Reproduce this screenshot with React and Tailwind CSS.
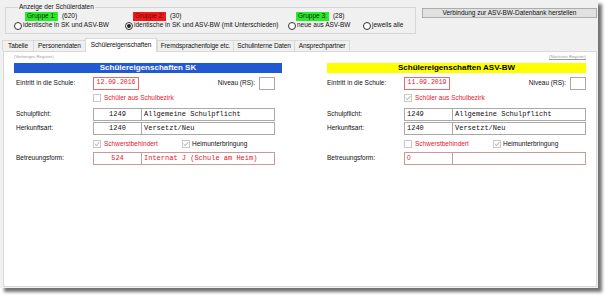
import React from "react";

const SANS = "[font-family:'Liberation_Sans',Arial,sans-serif]";
const MONO = "[font-family:'Liberation_Mono','Courier_New',monospace]";

function Radio({ checked }) {
  return (
    <span className="flex h-[8px] w-[8px] shrink-0 items-center justify-center rounded-full border border-[#333] bg-white">
      {checked && <span className="h-[4px] w-[4px] rounded-full bg-[#222]" />}
    </span>
  );
}

function Check({ checked }) {
  return (
    <span className="flex h-[8px] w-[8px] shrink-0 items-center justify-center border border-[#c8c8c8] bg-white">
      {checked && (
        <svg width="6" height="6" viewBox="0 0 6 6">
          <path d="M0.7 3.1 L2.3 4.7 L5.3 1.1" stroke="#9c9c9c" strokeWidth="0.9" fill="none" />
        </svg>
      )}
    </span>
  );
}

function GroupOption({ width, offset, tag, tagClass, count, label, checked }) {
  return (
    <div className={`flex flex-col ${width}`}>
      <div className={`mt-[1px] flex h-[9px] items-center ${offset}`}>
        {tag && <span className={`flex h-[9px] items-center px-[2px] ${tagClass}`}>{tag}</span>}
        {count && <span className="ml-[4px]">{count}</span>}
      </div>
      <div className="flex h-[9px] items-center gap-[1px]">
        <Radio checked={checked} />
        <span>{label}</span>
      </div>
    </div>
  );
}

function Row({ label, children, className = "" }) {
  return (
    <div className={`flex items-center ${className}`}>
      <span className="w-[77px] shrink-0">{label}</span>
      {children}
    </div>
  );
}

function CodeField({ code, text, centered, red, plainCode, border = "border-[#a9a9a9]" }) {
  const color = red ? "text-[#e5162e]" : "text-[#111]";
  return (
    <div className={`flex h-[13px] w-[182px] border bg-white ${border} ${color}`}>
      <div
        className={`flex w-[48px] shrink-0 items-center border-r border-[#a9a9a9] ${centered ? "justify-center" : "pl-[2px]"} ${plainCode ? "text-[6.5px]" : `${MONO} text-[7px]`}`}
      >
        {code}
      </div>
      <div className={`flex items-center pl-[2px] ${MONO} text-[7px]`}>{text}</div>
    </div>
  );
}

function Column({ data, className }) {
  return (
    <div className={className}>
      <div className={`flex h-[10px] items-center justify-center text-[8px] font-bold ${data.headerClass}`}>
        {data.title}
      </div>
      <div className={data.inner}>
        <Row label="Eintritt in die Schule:" className="mt-[4px] h-[13px]">
          <div className={`flex h-[13px] w-[46px] items-center justify-center border border-[#e86a6a] bg-white text-[6.5px] text-[#e5162e] ${MONO}`}>
            {data.date}
          </div>
          <span className="ml-auto">Niveau (RS):</span>
          <div className="ml-[4px] h-[13px] w-[16px] border border-[#a9a9a9] bg-white" />
        </Row>
        <Row label="" className="mt-[4px] h-[8px]">
          <Check checked={data.bezirk} />
          <span className="ml-[3px] text-[#e5162e]">Schüler aus Schulbezirk</span>
        </Row>
        <Row label="Schulpflicht:" className="mt-[6px] h-[13px]">
          <CodeField code="1249" text="Allgemeine Schulpflicht" centered={data.centered} />
        </Row>
        <Row label="Herkunftsart:" className="mt-[1px] h-[13px]">
          <CodeField code="1240" text="Versetzt/Neu" centered={data.centered} />
        </Row>
        <Row label="" className="mt-[5px] h-[8px]">
          <div className="flex w-[89px] items-center">
            <Check checked={data.schwerst} />
            <span className="ml-[3px] text-[#e5162e]">Schwerstbehindert</span>
          </div>
          <Check checked />
          <span className="ml-[2px]">Heimunterbringung</span>
        </Row>
        <Row label="Betreuungsform:" className="mt-[4px] h-[13px]">
          <CodeField
            code={data.betrCode}
            text={data.betrText}
            centered={data.centered}
            plainCode={data.plainCode}
            red
            border="border-[#c99a9a]"
          />
        </Row>
      </div>
    </div>
  );
}

const columns = [
  {
    title: "Schülereigenschaften SK",
    headerClass: "bg-[#2159d2] text-white",
    inner: "w-[259px] pl-[2px] box-content",
    date: "12.09.2016",
    bezirk: false,
    schwerst: true,
    centered: true,
    betrCode: "524",
    betrText: "Internat J (Schule am Heim)",
    plainCode: false,
  },
  {
    title: "Schülereigenschaften ASV-BW",
    headerClass: "bg-[#ffff00] text-black",
    inner: "w-[259px]",
    date: "11.09.2019",
    bezirk: true,
    schwerst: false,
    centered: false,
    betrCode: "0",
    betrText: "",
    plainCode: true,
  },
];

const tabs = [
  { label: "Tabelle", w: "w-[31px]" },
  { label: "Personendaten", w: "w-[52px]" },
  { label: "Schülereigenschaften", w: "w-[72px]", active: true },
  { label: "Fremdsprachenfolge etc.", w: "w-[76px]" },
  { label: "Schulinterne Daten", w: "w-[61px]" },
  { label: "Ansprechpartner", w: "w-[56px]" },
];

export default function App() {
  return (
    <div className={`h-[296px] w-[608px] overflow-hidden whitespace-nowrap bg-white text-[6.5px] leading-none text-[#111] ${SANS}`}>
      <div className="flex h-[288px] w-[598px] flex-col bg-[#f0f0f0] shadow-[4px_4px_3px_rgba(0,0,0,0.55)]">
        {/* top area */}
        <div className="flex h-[38px] shrink-0">
          <fieldset className="ml-[5px] mt-[3px] h-[31px] w-[411px] border border-[#d6d6d6] pl-[8px]">
            <legend className="ml-[4px] px-[1px] leading-[8px]">Anzeige der Schülerdaten</legend>
            <div className="flex">
              <GroupOption
                width="w-[111px]"
                offset="ml-[11px]"
                tag="Gruppe 1:"
                tagClass="bg-[#2ee82e] text-[#0c2a0c]"
                count="(620)"
                label="identische in SK und ASV-BW"
              />
              <GroupOption
                width="w-[163px]"
                offset="ml-[8px]"
                tag="Gruppe 2:"
                tagClass="bg-[#ef1c1c] text-[#7a0000]"
                count="(30)"
                label="identische in SK und ASV-BW (mit Unterschieden)"
                checked
              />
              <GroupOption
                width="w-[75px]"
                offset="ml-[8px]"
                tag="Gruppe 3:"
                tagClass="bg-[#2ee82e] text-[#0c2a0c]"
                count="(28)"
                label="neue aus ASV-BW"
              />
              <GroupOption width="w-[50px]" offset="" label="jeweils alle" />
            </div>
          </fieldset>
          <button className="ml-auto mr-[1px] mt-[8px] flex h-[10px] w-[175px] items-center justify-center border border-[#adadad] bg-[#e1e1e1]">
            Verbindung zur ASV-BW-Datenbank herstellen
          </button>
        </div>

        {/* tabs */}
        <div className="relative z-10 flex h-[13px] shrink-0 items-end pl-[2px]">
          {tabs.map((t) =>
            t.active ? (
              <div
                key={t.label}
                className={`-mb-[1px] flex h-[14px] ${t.w} items-center justify-center border border-b-0 border-[#d9d9d9] bg-white text-[6.5px] tracking-[-0.1px]`}
              >
                {t.label}
              </div>
            ) : (
              <div
                key={t.label}
                className={`flex h-[11px] ${t.w} items-center justify-center border border-b-0 border-r-0 border-[#d9d9d9] bg-[#f0f0f0] text-[6.5px] tracking-[-0.1px] last:border-r`}
              >
                {t.label}
              </div>
            )
          )}
        </div>

        {/* panel */}
        <div className="mb-[1px] ml-[3px] mr-[1px] flex flex-1 flex-col border border-[#d9d9d9] bg-white pl-[10px]">
          <div className="mt-[2px] flex h-[7px] w-[572px] items-center justify-between text-[4.2px] text-[#9a9a9a]">
            <span>(Vorheriges Register)</span>
            <span className="underline">(Nächstes Register)</span>
          </div>
          <div className="mt-[2px] flex w-[572px] justify-between">
            <Column data={columns[0]} className="w-[268px]" />
            <Column data={columns[1]} className="w-[259px]" />
          </div>
        </div>
      </div>
    </div>
  );
}
